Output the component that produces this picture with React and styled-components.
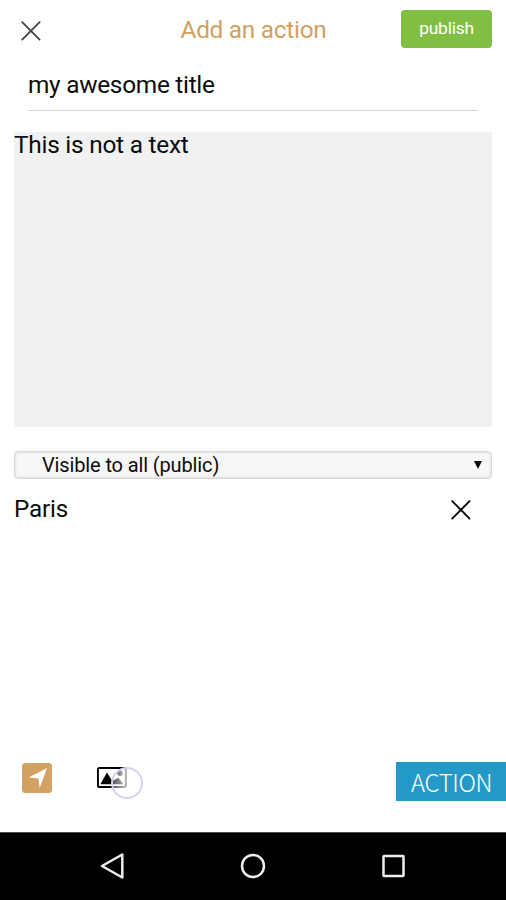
import React, { useState } from 'react';
import styled, { createGlobalStyle } from 'styled-components';

const GlobalStyle = createGlobalStyle`
  * {
    box-sizing: border-box;
  }
  body {
    margin: 0;
    background-color: #ffffff;
    font-family: Roboto, sans-serif;
    color: #0c0c0c;
  }
  svg {
    display: block;
  }
`;

const Screen = styled.div`
  display: flex;
  flex-direction: column;
  width: 100%;
  height: 900px;
  overflow: hidden;
`;

const Header = styled.header`
  display: grid;
  grid-template-columns: 92px 1fr 91px;
  align-items: center;
  height: 57px;
  padding: 0 14px;
`;

const HeaderTitle = styled.h1`
  margin: 0;
  padding-top: 2px;
  text-align: center;
  font-size: 24.4px;
  font-weight: 400;
  letter-spacing: -0.28px;
  line-height: 28px;
  color: #d3a05e;
`;

const IconButton = styled.button`
  display: block;
  padding: 0;
  border: none;
  background: none;
  color: ${({ $color }) => $color || '#000000'};
`;

const CloseButton = styled(IconButton)`
  margin: 4px 0 0 7px;
`;

const PublishButton = styled.button`
  height: 38px;
  padding: 0 0 2px;
  border: none;
  border-radius: 4px;
  background-color: #80bf43;
  color: #ffffff;
  font-family: inherit;
  font-size: 17.4px;
  letter-spacing: -0.2px;
`;

const TitleInput = styled.input`
  height: 54px;
  margin: 0 28px;
  padding: 2px 0 0;
  border: none;
  border-bottom: 1px solid #d6d6d6;
  outline: none;
  background: none;
  color: #0c0c0c;
  font-family: inherit;
  font-size: 24.4px;
  letter-spacing: -0.28px;
`;

const ContentInput = styled.textarea`
  flex: none;
  height: 295px;
  margin: 21px 14px 0;
  padding: 0;
  border: none;
  outline: none;
  resize: none;
  background-color: #f1f1f1;
  color: #0c0c0c;
  font-family: inherit;
  font-size: 24.4px;
  letter-spacing: -0.24px;
  line-height: 26px;
`;

const VisibilitySelect = styled.button`
  display: flex;
  flex: none;
  align-items: center;
  justify-content: space-between;
  height: 28px;
  margin: 24px 14px 0;
  padding: 0 9px 1px 27px;
  border: 1px solid #d9d9d9;
  border-radius: 4px;
  background-color: #f7f7f7;
  box-shadow: inset 0 0 2px 1px #e2e2e2;
  color: #0c0c0c;
  font-family: inherit;
  font-size: 20px;
  letter-spacing: -0.13px;
  line-height: 24px;
`;

const PlaceRow = styled.div`
  display: flex;
  align-items: center;
  justify-content: space-between;
  height: 61px;
  padding: 0 35px 0 14px;
  font-size: 24.2px;
  letter-spacing: -0.15px;
`;

const Place = styled.span`
  padding-bottom: 2px;
`;

const Toolbar = styled.div`
  display: flex;
  align-items: flex-start;
  height: 70px;
  margin-top: auto;
`;

const LocationButton = styled(IconButton)`
  margin: 1px 0 0 22px;
`;

const PictureButton = styled(IconButton)`
  position: relative;
  margin: 5px 0 0 44.5px;
`;

const TouchRing = styled.span`
  position: absolute;
  top: 0;
  left: 14px;
  width: 32px;
  height: 32px;
  border: 2px solid #d0d4f1;
  border-radius: 50%;
  background: linear-gradient(to right, rgba(255, 255, 255, 0.35), rgba(255, 255, 255, 0.7) 40%);
`;

const ActionLabel = styled.div`
  display: flex;
  align-items: center;
  width: 110px;
  height: 39px;
  margin-left: auto;
  padding-left: 15px;
  background-color: #2499c7;
  color: #ffffff;
  font-family: 'Noto Sans CJK SC', sans-serif;
  font-size: 24px;
  font-weight: 300;
  letter-spacing: -0.35px;
  line-height: 37px;
`;

const NavigationBar = styled.nav`
  display: flex;
  flex: none;
  align-items: center;
  justify-content: space-between;
  height: 68px;
  padding: 0 98px 1px;
  border-top: 1px solid #505050;
  background-color: #000000;
`;

const CloseIcon = () => (
  <svg width="20" height="20" viewBox="0 0 20 20" fill="none" stroke="currentColor" strokeWidth="1.8" strokeLinecap="round">
    <path d="M1.2 1.2 18.6 18.6M18.6 1.2 1.2 18.6" />
  </svg>
);

const ArrowIcon = () => (
  <svg width="8" height="9" viewBox="0 0 8 9">
    <path d="M0 1H8L4 9Z" fill="currentColor" />
  </svg>
);

const LocationIcon = () => (
  <svg width="30" height="30" viewBox="0 0 30 30">
    <rect width="30" height="30" rx="3.5" fill="#d3a262" />
    <path d="M25 5 17.7 25 16.5 15.6 6.8 14.6Z" fill="#ffffff" />
  </svg>
);

const PictureIcon = () => (
  <svg width="30" height="21" viewBox="0 0 30 21">
    <rect x="0.9" y="1" width="28" height="19" rx="1.5" fill="#ffffff" stroke="currentColor" strokeWidth="2" />
    <path d="M3.3 17.3 10 5.6 15.3 14 21.3 10.8 26.5 17.3Z" fill="currentColor" />
    <circle cx="23" cy="6.3" r="2.7" fill="currentColor" />
  </svg>
);

const BackIcon = () => (
  <svg width="28" height="28" viewBox="0 0 28 28" fill="none" stroke="currentColor" strokeWidth="2.5" strokeLinejoin="round">
    <path d="M4 14 24.3 2.5V25.5Z" />
  </svg>
);

const HomeIcon = () => (
  <svg width="28" height="28" viewBox="0 0 28 28" fill="none" stroke="currentColor" strokeWidth="2.5">
    <circle cx="14" cy="14" r="11" />
  </svg>
);

const RecentIcon = () => (
  <svg width="28" height="28" viewBox="0 0 28 28" fill="none" stroke="currentColor" strokeWidth="2.5">
    <rect x="3.5" y="4" width="20" height="20" rx="0.5" />
  </svg>
);

const App = () => {
  const [title, setTitle] = useState('my awesome title');
  const [content, setContent] = useState('This is not a text');
  const [place, setPlace] = useState('Paris');

  const handleTitleChange = (e) => {
    setTitle(e.target.value);
  };

  const handleContentChange = (e) => {
    setContent(e.target.value);
  };

  return (
    <>
      <GlobalStyle />
      <Screen>
        <Header>
          <CloseButton $color="#424242"><CloseIcon /></CloseButton>
          <HeaderTitle>Add an action</HeaderTitle>
          <PublishButton>publish</PublishButton>
        </Header>
        <TitleInput type="text" value={title} onChange={handleTitleChange} />
        <ContentInput value={content} onChange={handleContentChange} spellCheck={false} />
        <VisibilitySelect>
          <span>Visible to all (public)</span>
          <ArrowIcon />
        </VisibilitySelect>
        {place && (
          <PlaceRow>
            <Place>{place}</Place>
            <IconButton onClick={() => setPlace('')}><CloseIcon /></IconButton>
          </PlaceRow>
        )}
        <Toolbar>
          <LocationButton><LocationIcon /></LocationButton>
          <PictureButton>
            <PictureIcon />
            <TouchRing />
          </PictureButton>
          <ActionLabel>ACTION</ActionLabel>
        </Toolbar>
        <NavigationBar>
          <IconButton $color="#eeeeee"><BackIcon /></IconButton>
          <IconButton $color="#eeeeee"><HomeIcon /></IconButton>
          <IconButton $color="#eeeeee"><RecentIcon /></IconButton>
        </NavigationBar>
      </Screen>
    </>
  );
};

export default App;
